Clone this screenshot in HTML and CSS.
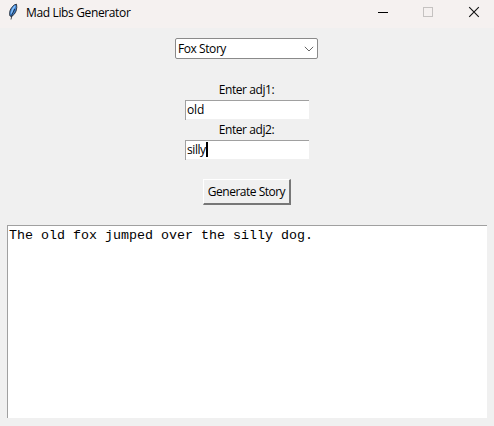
FILE: index.html
```html
<!DOCTYPE html>
<html lang="en">
<head>
<meta charset="utf-8">
<title>Mad Libs Generator</title>
<link rel="stylesheet" href="styles.css">
</head>
<body>
<header class="titlebar">
  <svg class="feather" width="12" height="18" viewBox="0 0 12 18">
    <path d="M3 13C1.800 10 3 6.500 5.500 3.500Q7.500 1.300 9.500 1.200Q10.300 4 9.100 8Q7.800 11.500 4.700 13.500Z" fill="#3b7fd0" stroke="#252b36" stroke-width=".9"/>
    <path d="M4.500 10.500Q5 6 8 3" fill="none" stroke="#8cc4fa" stroke-width="1.500"/>
    <path d="M4 16.500Q4.300 11.500 7.800 6" fill="none" stroke="#18202c" stroke-width=".8"/>
  </svg>
  <span class="title">Mad Libs Generator</span>
  <div class="controls">
    <svg width="46" height="28" viewBox="0 0 46 28"><path d="M18 12.500h10" stroke="#000"/></svg>
    <svg width="46" height="28" viewBox="0 0 46 28"><rect x="17.500" y="7.500" width="9" height="9" fill="none" stroke="#c5c2c1"/></svg>
    <svg width="46" height="28" viewBox="0 0 46 28"><path d="M17.200 7.200l9.600 9.600M26.800 7.200l-9.600 9.600" stroke="#111" stroke-width="1.100"/></svg>
  </div>
</header>
<main class="content">
  <div class="combo"><span class="combo-value">Fox Story</span>
    <svg width="10" height="6" viewBox="0 0 10 6"><path d="M.8 .8L5 5L9.200 .8" fill="none" stroke="#666"/></svg>
  </div>
  <div class="fields">
    <div class="label">Enter adj1:</div>
    <div class="entry"><span class="old">old</span></div>
    <div class="label">Enter adj2:</div>
    <div class="entry"><span class="silly">silly</span><i class="caret"></i></div>
  </div>
  <div class="button"><span>Generate Story</span></div>
  <div class="output">The old fox jumped over the silly dog.</div>
</main>
</body>
</html>
```
FILE: styles.css
```css
* { box-sizing: border-box; }
body {
  margin: 0;
  height: 426px;
  overflow: hidden;
  background: #f0f0f0;
  color: #000;
  font: 12px/18px "Open Sans", "Noto Sans", sans-serif;
  letter-spacing: -0.43px;
  white-space: nowrap;
}
.titlebar {
  display: flex;
  height: 28px;
  padding-left: 7px;
  background: #f5f1f0;
}
.feather { margin-top: 3px; }
.title { margin: 4px 0 0 7px; letter-spacing: -0.36px; }
.controls { display: flex; margin-left: auto; margin-right: -4px; }
.content {
  display: flex;
  flex-direction: column;
  align-items: center;
  padding-top: 10px;
}
.combo {
  display: flex;
  align-items: center;
  justify-content: space-between;
  width: 143px;
  height: 21px;
  margin-right: 1px;
  padding: 0 3px 0 2px;
  background: #fff;
  border: 1px solid #8a8a8a;
  border-radius: 2px;
}
.fields { width: 124px; margin-top: 21px; }
.label { height: 20px; padding-top: 1px; padding-right: 1px; text-align: center; }
.entry {
  display: flex;
  height: 20px;
  padding-left: 1px;
  background: #fff;
  border: solid #a0a0a0;
  border-width: 1px 0 0 1px;
  box-shadow: inset 0 -1px #f0f0f0;
}
.old { letter-spacing: -0.1px; }
.caret { width: 2px; height: 15px; margin-top: 1px; background: #000; }
.button {
  width: 88px;
  height: 26px;
  margin-top: 19px;
  padding-top: 3px;
  text-align: center;
  letter-spacing: -0.5px;
  border: solid;
  border-width: 1px 2px 2px 1px;
  border-color: #fff #777 #777 #fff;
}
.output {
  width: 480px;
  height: 193px;
  margin-top: 20px;
  padding: 2px 1px;
  background: #fff;
  border: solid #a0a0a0;
  border-width: 1px 0 0 1px;
  font: 13.333px/16px "Liberation Mono", monospace;
  letter-spacing: 0;
}
```
